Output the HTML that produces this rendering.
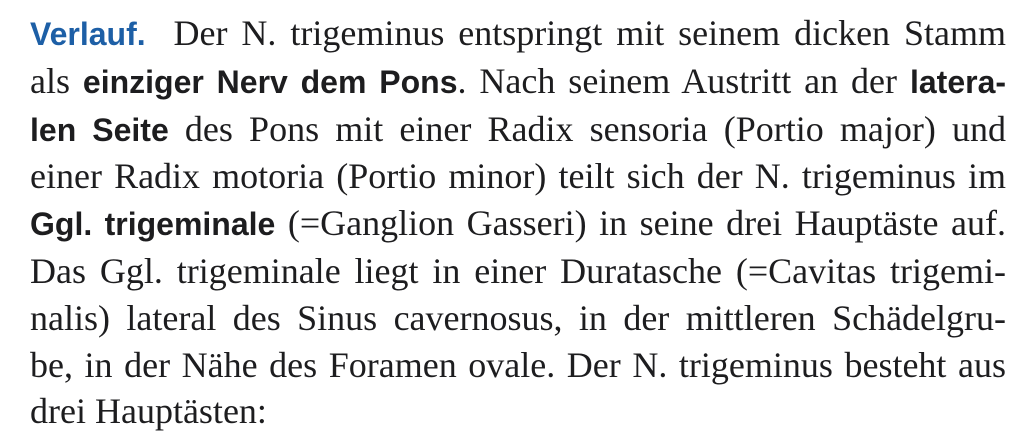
<!DOCTYPE html>
<html><head><meta charset="utf-8"><style>
html,body{margin:0;padding:0;background:#fff;width:1024px;height:448px;overflow:hidden}
.t{position:absolute;left:30px;top:10px;width:976px;font-family:"Liberation Serif",serif;font-size:36px;line-height:46.8px;color:#1d1d1f}
.l{text-align:justify;text-align-last:justify;white-space:nowrap}
.last{text-align-last:left}
b{font-family:"Liberation Sans",sans-serif;font-weight:bold;font-size:32px}
.blue{color:#1d5fa6}
</style></head><body>
<div class="t">
<div class="l"><b class="blue">Verlauf.</b>&nbsp; Der N. trigeminus entspringt mit seinem dicken Stamm</div>
<div class="l">als <b>einziger Nerv dem Pons</b>. Nach seinem Austritt an der <b>latera-</b></div>
<div class="l"><b>len Seite</b> des Pons mit einer Radix sensoria (Portio major) und</div>
<div class="l">einer Radix motoria (Portio minor) teilt sich der N. trigeminus im</div>
<div class="l"><b>Ggl. trigeminale</b> (=Ganglion Gasseri) in seine drei Hauptäste auf.</div>
<div class="l">Das Ggl. trigeminale liegt in einer Duratasche (=Cavitas trigemi-</div>
<div class="l">nalis) lateral des Sinus cavernosus, in der mittleren Schädelgru-</div>
<div class="l">be, in der Nähe des Foramen ovale. Der N. trigeminus besteht aus</div>
<div class="l last">drei Hauptästen:</div>
</div>
</body></html>
